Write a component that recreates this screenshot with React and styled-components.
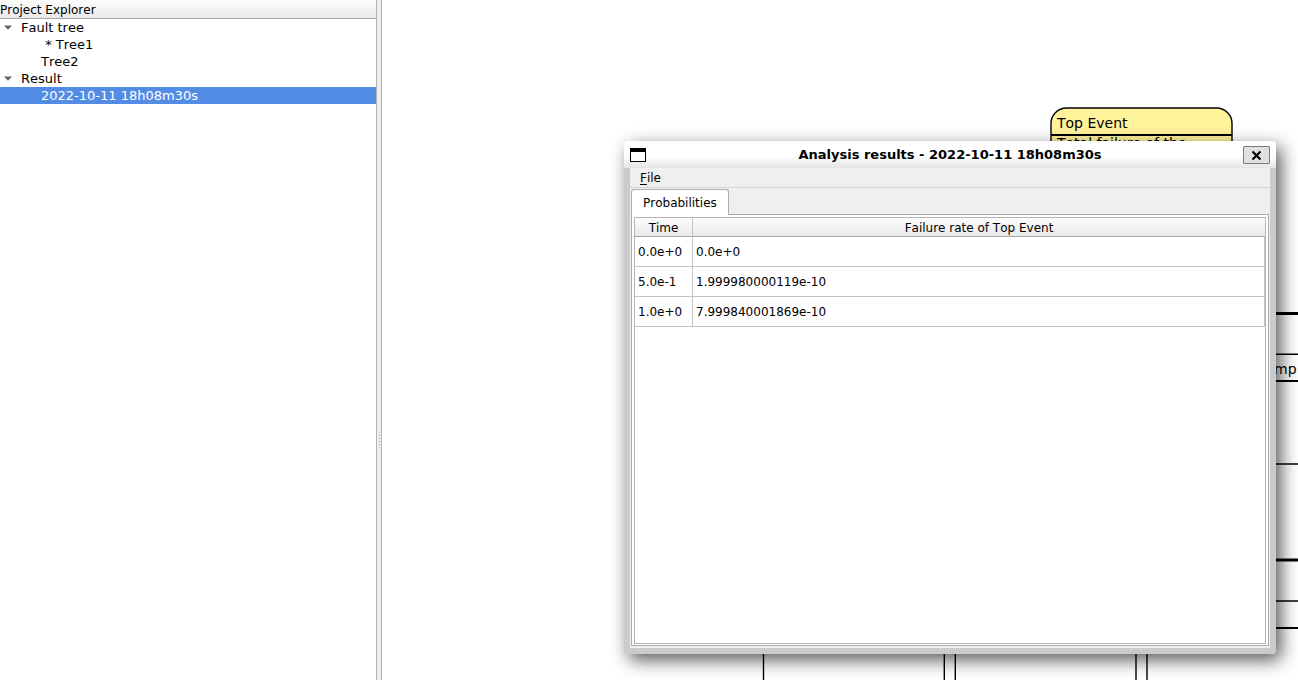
import React from "react";
import styled, { createGlobalStyle } from "styled-components";

const GlobalStyle = createGlobalStyle`
  * { box-sizing: border-box; }
  body {
    margin: 0;
    background: #fff;
    color: #000;
    font-family: "DejaVu Sans", sans-serif;
    font-size: 12px;
    font-kerning: none;
    overflow: hidden;
  }
  button {
    font: inherit;
    font-kerning: inherit;
    color: inherit;
    cursor: default;
  }
`;

const Workspace = styled.div`
  display: flex;
  height: 100vh;
  overflow: hidden;
`;

const Explorer = styled.aside`
  flex: 0 0 376px;
  background: #fff;
`;

const ExplorerHeader = styled.h2`
  margin: 0;
  height: 19px;
  line-height: 20px;
  font-size: 12px;
  font-weight: normal;
  background: linear-gradient(#fdfdfd, #e9e9e9);
  border-bottom: 1px solid #a5a5a5;
`;

const Tree = styled.ul`
  margin: 0;
  padding: 0;
  list-style: none;
`;

const TreeRow = styled.li`
  display: flex;
  align-items: center;
  height: 17px;
  padding-left: ${(p) => (p.$level ? 41 : 4)}px;
  gap: 9px;
  font-size: 13px;
  line-height: 17px;
  white-space: pre;
  color: ${(p) => (p.$selected ? "#fff" : "#000")};
  background: ${(p) => (p.$selected ? "#538ce4" : "transparent")};
`;

const Splitter = styled.div`
  flex: 0 0 6px;
  display: flex;
  flex-direction: column;
  align-items: center;
  gap: 2px;
  padding-top: 432px;
  background: #efefef;
  border-left: 1px solid #b4b4b4;
  border-right: 1px solid #b4b4b4;
`;

const Grip = styled.span`
  flex: none;
  width: 1px;
  height: 1px;
  background: #a0a0a0;
`;

const Canvas = styled.main`
  position: relative;
  flex: 1;
  overflow: hidden;
  background: #fff;
`;

const Diagram = styled.svg`
  display: block;
  font-size: 14px;
`;

const Window = styled.section`
  position: absolute;
  left: 242px;
  top: 141px;
  width: 652px;
  height: 513px;
  display: flex;
  flex-direction: column;
  border-radius: 3px;
  background: #cbcbcb;
  box-shadow: 5px 6px 18px rgba(0, 0, 0, 0.66);
`;

const TitleBar = styled.header`
  display: flex;
  align-items: center;
  flex: 0 0 27px;
  padding: 0 6px;
  border-radius: 3px 3px 0 0;
  background: linear-gradient(#fff 55%, #e4e4e4);
`;

const WindowIcon = styled.svg`
  flex: none;
  width: 27px;
  height: 14px;
`;

const Title = styled.h1`
  flex: 1;
  margin: 0;
  font-size: 13px;
  line-height: 26px;
  font-weight: bold;
  text-align: center;
`;

const CloseButton = styled.button`
  display: grid;
  place-items: center;
  width: 27px;
  height: 18px;
  padding: 0;
  border: 1px solid #7c7c7c;
  border-radius: 1px;
  background: #e0e0e0;
`;

const WindowBody = styled.div`
  flex: 1;
  display: flex;
  flex-direction: column;
  margin: 0 6px 6px;
  background: #efefef;
  min-height: 0;
`;

const MenuBar = styled.nav`
  flex: 0 0 20px;
  border-bottom: 1px solid #d3d3d3;
`;

const MenuButton = styled.button`
  display: block;
  padding: 1px 10px 0;
  border: 0;
  background: none;
  line-height: 18px;
  text-underline-offset: 2px;
`;

const TabBar = styled.div`
  position: relative;
  z-index: 1;
  display: flex;
  padding: 1px 1px 0;
  margin-bottom: -1px;
`;

const Tab = styled.button`
  height: 26px;
  padding: 1px 11px 0;
  border: 1px solid #adadad;
  border-bottom: 0;
  border-radius: 3px 3px 0 0;
  background: #fff;
  line-height: 24px;
`;

const TabPane = styled.div`
  flex: 1;
  display: flex;
  margin: 0 1px 2px;
  padding: 2px 2px 1px;
  border: 1px solid #ababab;
  background: #fff;
`;

const TableFrame = styled.div`
  flex: 1;
  border: 1px solid #b4b4b4;
  background: #fff;
`;

const Table = styled.table`
  width: 100%;
  border-collapse: separate;
  border-spacing: 0;
  table-layout: fixed;
`;

const TimeColumn = styled.col`
  width: 58px;
`;

const HeadCell = styled.th`
  height: 19px;
  padding: 2px 0 0;
  font-weight: normal;
  line-height: 16px;
  text-align: center;
  background: linear-gradient(#fdfdfd, #e9e9e9);
  border-bottom: 1px solid #a5a5a5;
  border-right: ${(p) => (p.$last ? 0 : 1)}px solid #c4c4c4;
`;

const Cell = styled.td`
  height: 30px;
  padding: 1px 3px 0;
  line-height: 28px;
  border-right: 1px solid #c4c4c4;
  border-bottom: 1px solid #c4c4c4;
`;

const tree = [
  { label: "Fault tree", level: 0 },
  { label: " * Tree1", level: 1 },
  { label: "Tree2", level: 1 },
  { label: "Result", level: 0 },
  { label: "2022-10-11 18h08m30s", level: 1, selected: true },
];

const results = [
  ["0.0e+0", "0.0e+0"],
  ["5.0e-1", "1.999980000119e-10"],
  ["1.0e+0", "7.999840001869e-10"],
];

function ExpandArrow() {
  return (
    <svg width="8" height="5" viewBox="0 0 8 5" aria-hidden="true">
      <path d="M0 0.5H8L4 4.8Z" fill="#666" />
    </svg>
  );
}

function FaultTreeDiagram() {
  return (
    <Diagram width="100%" height="100%" aria-label="Fault tree diagram">
      <g stroke="#000" strokeWidth="1.4" fill="none">
        <path d="M669 160V124A15.500 15.500 0 0 1 684.500 108H834.500A15.500 15.500 0 0 1 850 124V160Z" fill="#fff39c" />
        <path d="M669 135H850" strokeWidth="1.800" />
        <path d="M860 313.500H1600" strokeWidth="3" />
        <path d="M860 354.300H1600" />
        <path d="M860 381H1600" strokeWidth="1.900" />
        <path d="M860 464H1600" />
        <path d="M860 560H1600" strokeWidth="3.200" />
        <path d="M860 601H1600" />
        <path d="M860 628H1600" strokeWidth="1.900" />
        <path d="M381.500 640V2000M562.300 640V2000M573.300 640V2000M754 640V2000M765 640V2000" />
      </g>
      <text x="675" y="128">Top Event</text>
      <text x="675" y="148">Total failure of the</text>
      <text x="892" y="374">mp</text>
    </Diagram>
  );
}

function ResultsWindow() {
  return (
    <Window role="dialog" aria-labelledby="results-title">
      <TitleBar>
        <WindowIcon viewBox="0 0 27 14" aria-hidden="true">
          <path d="M0 0H16V14H0Z" fill="#000" />
          <path d="M1 4H15V13H1Z" fill="#fff" />
        </WindowIcon>
        <Title id="results-title">Analysis results - 2022-10-11 18h08m30s</Title>
        <CloseButton aria-label="Close">
          <svg width="11" height="10" viewBox="0 0 11 10">
            <path d="M1.500 1.500L9.500 9.500M9.500 1.500L1.500 9.500" stroke="#000" strokeWidth="2.200" />
          </svg>
        </CloseButton>
      </TitleBar>
      <WindowBody>
        <MenuBar>
          <MenuButton><u>F</u>ile</MenuButton>
        </MenuBar>
        <TabBar role="tablist">
          <Tab role="tab" id="tab-prob" aria-selected="true" aria-controls="pane-prob">Probabilities</Tab>
        </TabBar>
        <TabPane role="tabpanel" id="pane-prob" aria-labelledby="tab-prob">
          <TableFrame>
            <Table>
              <colgroup>
                <TimeColumn />
                <col />
              </colgroup>
              <thead>
                <tr>
                  <HeadCell scope="col">Time</HeadCell>
                  <HeadCell scope="col" $last>Failure rate of Top Event</HeadCell>
                </tr>
              </thead>
              <tbody>
                {results.map(([time, rate]) => (
                  <tr key={time}>
                    <Cell>{time}</Cell>
                    <Cell>{rate}</Cell>
                  </tr>
                ))}
              </tbody>
            </Table>
          </TableFrame>
        </TabPane>
      </WindowBody>
    </Window>
  );
}

export default function App() {
  return (
    <>
      <GlobalStyle />
      <Workspace>
        <Explorer>
          <ExplorerHeader>Project Explorer</ExplorerHeader>
          <Tree role="tree" aria-label="Project Explorer">
            {tree.map((item) => (
              <TreeRow
                key={item.label}
                role="treeitem"
                aria-level={item.level + 1}
                aria-selected={!!item.selected}
                $level={item.level}
                $selected={item.selected}
              >
                {item.level === 0 && <ExpandArrow />}
                <span>{item.label}</span>
              </TreeRow>
            ))}
          </Tree>
        </Explorer>
        <Splitter role="separator" aria-orientation="vertical">
          {[0, 1, 2, 3, 4, 5].map((n) => (
            <Grip key={n} />
          ))}
        </Splitter>
        <Canvas>
          <FaultTreeDiagram />
          <ResultsWindow />
        </Canvas>
      </Workspace>
    </>
  );
}
